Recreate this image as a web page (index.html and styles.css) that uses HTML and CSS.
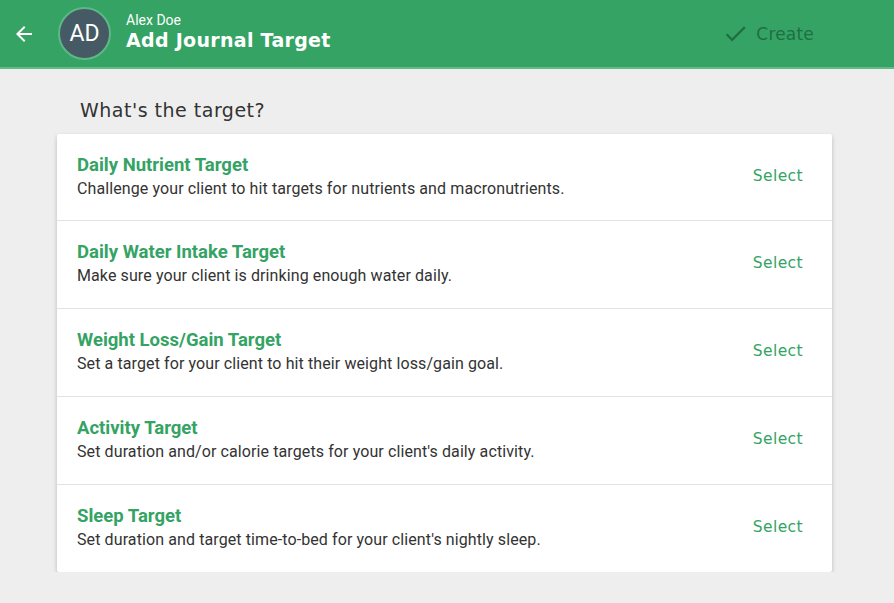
FILE: index.html
```html
<!DOCTYPE html>
<html lang="en">
<head>
    <meta charset="UTF-8">
    <meta name="viewport" content="width=device-width, initial-scale=1.0">
    <title>Add Journal Target</title>
    <link rel="stylesheet" href="styles.css">
</head>
<body>
    <header class="topbar">
        <button class="back" aria-label="Back">
            <svg width="24" height="24" viewBox="0 0 24 24"><path d="M20 11H7.83l5.59-5.59L12 4l-8 8 8 8 1.41-1.41L7.83 13H20v-2z" fill="#fff"/></svg>
        </button>
        <div class="avatar">AD</div>
        <div class="titles">
            <div class="user-name">Alex Doe</div>
            <h1 class="page-title">Add Journal Target</h1>
        </div>
        <button class="create">
            <svg width="27" height="27" viewBox="0 0 24 24"><path d="M9 16.17L4.83 12l-1.42 1.41L9 19 21 7l-1.41-1.41z" fill="currentColor"/></svg>
            <span>Create</span>
        </button>
    </header>

    <main class="content">
        <h2 class="question">What's the target?</h2>
        <div class="card">
            <div class="option">
                <div class="option-text">
                    <div class="option-title">Daily Nutrient Target</div>
                    <div class="option-desc">Challenge your client to hit targets for nutrients and macronutrients.</div>
                </div>
                <button class="select">Select</button>
            </div>
            <div class="option">
                <div class="option-text">
                    <div class="option-title">Daily Water Intake Target</div>
                    <div class="option-desc">Make sure your client is drinking enough water daily.</div>
                </div>
                <button class="select">Select</button>
            </div>
            <div class="option">
                <div class="option-text">
                    <div class="option-title">Weight Loss/Gain Target</div>
                    <div class="option-desc">Set a target for your client to hit their weight loss/gain goal.</div>
                </div>
                <button class="select">Select</button>
            </div>
            <div class="option">
                <div class="option-text">
                    <div class="option-title">Activity Target</div>
                    <div class="option-desc">Set duration and/or calorie targets for your client's daily activity.</div>
                </div>
                <button class="select">Select</button>
            </div>
            <div class="option">
                <div class="option-text">
                    <div class="option-title">Sleep Target</div>
                    <div class="option-desc">Set duration and target time-to-bed for your client's nightly sleep.</div>
                </div>
                <button class="select">Select</button>
            </div>
        </div>
    </main>
</body>
</html>
```

FILE: styles.css
```css
body {
    margin: 0;
    background: #eeeeee;
    font-family: Roboto, "Liberation Sans", sans-serif;
    color: #333333;
}
button {
    font: inherit;
    background: none;
    border: none;
    padding: 0;
    cursor: pointer;
}
.topbar {
    display: flex;
    align-items: center;
    height: 67px;
    background: #34a364;
    border-bottom: 2px solid #64b98a;
}
.back {
    display: flex;
    margin-left: 12px;
    width: 24px;
    height: 24px;
}
.avatar {
    display: flex;
    align-items: center;
    justify-content: center;
    width: 49px;
    height: 49px;
    margin-left: 22px;
    border-radius: 50%;
    background: #455a64;
    border: 2px solid #5db886;
    color: #ffffff;
    font-size: 23px;
}
.titles {
    margin-left: 15px;
    color: #ffffff;
}
.user-name {
    font-size: 14px;
    line-height: 16px;
    margin-top: -5px;
}
.page-title {
    margin: 1px 0 0;
    font-family: "DejaVu Sans", sans-serif;
    font-size: 19px;
    font-weight: 600;
    letter-spacing: 0.3px;
}
.create {
    display: flex;
    align-items: center;
    gap: 7px;
    margin-left: auto;
    margin-right: 80px;
    color: #206f43;
    font-family: "DejaVu Sans", sans-serif;
    font-size: 17px;
    letter-spacing: 0.2px;
}
.content {
    width: 775px;
    margin-left: 57px;
    padding-top: 29px;
}
.question {
    margin: 0 0 12px 23px;
    font-family: "DejaVu Sans", sans-serif;
    font-size: 19px;
    line-height: 24px;
    font-weight: 500;
    color: #333333;
    letter-spacing: 0.5px;
}
.card {
    background: #ffffff;
    border-radius: 2px;
    box-shadow: 0 2px 4px rgba(0, 0, 0, 0.22);
}
.option {
    display: flex;
    align-items: center;
    height: 87px;
    padding: 0 29px 0 20px;
    border-top: 1px solid #e3e3e3;
}
.option:first-child {
    border-top: none;
    height: 86px;
}
.option-text {
    flex: 1;
}
.option-title {
    font-size: 18.5px;
    font-weight: 700;
    color: #34a364;
    line-height: 22px;
}
.option-desc {
    margin-top: 1px;
    font-size: 16px;
    line-height: 24px;
    letter-spacing: 0.1px;
    color: #333333;
}
.select {
    margin-bottom: 3px;
    font-family: "DejaVu Sans", sans-serif;
    font-size: 15.5px;
    color: #34a364;
    letter-spacing: 0.4px;
}
```
